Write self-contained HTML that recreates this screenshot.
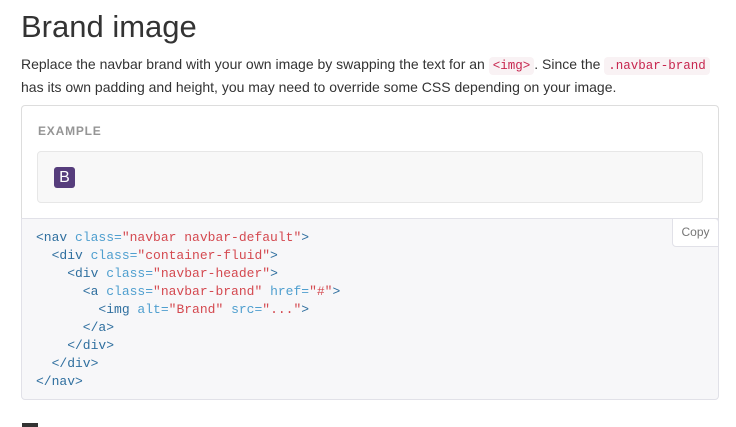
<!DOCTYPE html>
<html><head><style>
body{margin:0;width:736px;height:427px;overflow:hidden;background:#fff;font-family:"Liberation Sans",sans-serif;color:#333;position:relative}
h1{position:absolute;left:21px;top:9px;margin:0;font-size:31px;font-weight:500;line-height:36px}
p{position:absolute;left:21px;top:54px;margin:0;font-size:14px;line-height:21px;width:710px}
code{font-family:"Liberation Mono",monospace;font-size:12.5px;color:#c7254e;background:#f9f2f4;padding:2px 4px;border-radius:4px}
.ex{position:absolute;left:21px;top:105px;width:696px;height:112px;border:1px solid #ddd;border-bottom:none;border-radius:4px 4px 0 0}
.lab{position:absolute;left:16px;top:18px;font-size:12px;font-weight:bold;color:#959595;letter-spacing:0.8px}
.nav{position:absolute;left:15px;top:45px;width:664px;height:50px;background:#f8f8f8;border:1px solid #e7e7e7;border-radius:4px}
.b{position:absolute;left:16px;top:15px;width:21px;height:21px;background:#563d7c;border-radius:3px;color:#fff;font-size:16px;text-align:center;line-height:21px}
.code{position:absolute;left:21px;top:218px;width:696px;height:180px;background:#f7f7f9;border:1px solid #e1e1e8;border-radius:0 0 4px 4px}
pre{margin:0;position:absolute;left:14px;top:10px;font-family:"Liberation Mono",monospace;font-size:13px;line-height:18px;color:#2f6f9f}
.a{color:#4f9fcf}.s{color:#d44950}
.copy{position:absolute;right:-1px;top:-1px;width:45px;height:27px;background:#fff;border:1px solid #e1e1e8;border-radius:0 4px 0 4px;font-size:12px;color:#767676;text-align:center;line-height:27px}
.dash{position:absolute;left:22px;top:423px;width:16px;height:4px;background:#333}
</style></head><body>
<h1>Brand image</h1>
<p>Replace the navbar brand with your own image by swapping the text for an <code>&lt;img&gt;</code>. Since the <code>.navbar-brand</code> has its own padding and height, you may need to override some CSS depending on your image.</p>
<div class="ex"><div class="lab">EXAMPLE</div><div class="nav"><div class="b">B</div></div></div>
<div class="code"><div class="copy">Copy</div><pre>&lt;nav <span class="a">class=</span><span class="s">"navbar navbar-default"</span>&gt;
  &lt;div <span class="a">class=</span><span class="s">"container-fluid"</span>&gt;
    &lt;div <span class="a">class=</span><span class="s">"navbar-header"</span>&gt;
      &lt;a <span class="a">class=</span><span class="s">"navbar-brand"</span> <span class="a">href=</span><span class="s">"#"</span>&gt;
        &lt;img <span class="a">alt=</span><span class="s">"Brand"</span> <span class="a">src=</span><span class="s">"..."</span>&gt;
      &lt;/a&gt;
    &lt;/div&gt;
  &lt;/div&gt;
&lt;/nav&gt;</pre></div>
<div class="dash"></div>
</body></html>
